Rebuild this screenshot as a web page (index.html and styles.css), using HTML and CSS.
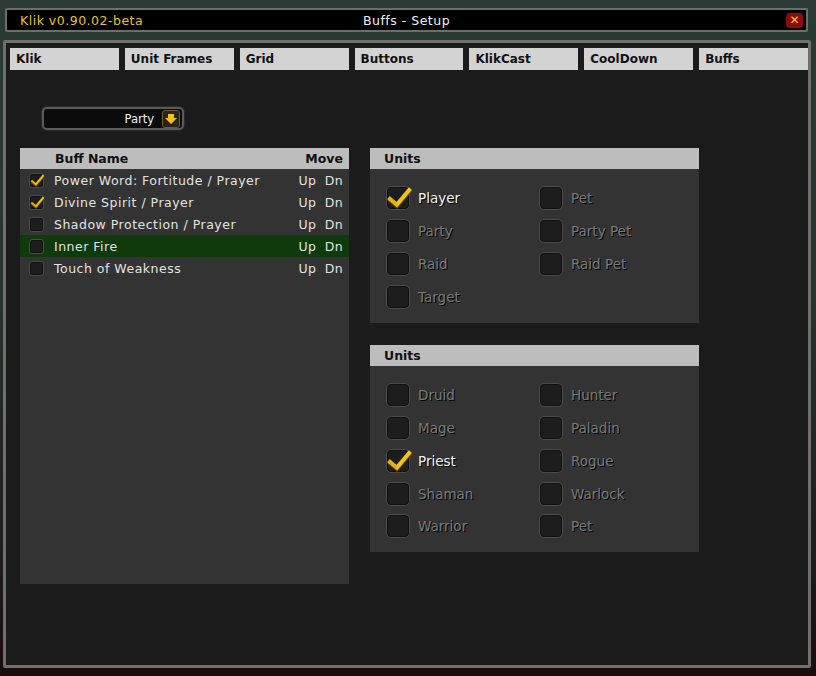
FILE: index.html
```html
<!DOCTYPE html>
<html lang="en">
<head>
  <meta charset="UTF-8">
  <title>Buffs - Setup</title>
  <link rel="stylesheet" href="styles.css">
</head>
<body>
  <div class="titlebar">
    <span class="addon">Klik v0.90.02-beta</span>
    <span class="title">Buffs - Setup</span>
    <span class="close">&#x2715;</span>
  </div>

  <div class="frame">
    <div class="tabs">
      <div class="tab">Klik</div>
      <div class="tab">Unit Frames</div>
      <div class="tab">Grid</div>
      <div class="tab">Buttons</div>
      <div class="tab">KlikCast</div>
      <div class="tab">CoolDown</div>
      <div class="tab">Buffs</div>
    </div>

    <div class="dropdown">
      <span class="dd-value">Party</span>
      <span class="dd-btn">
        <svg width="12" height="12" viewBox="0 0 12 12"><path d="M3 1h6v4h3L6 11 0 5h3z" fill="#f0c020"/></svg>
      </span>
    </div>

    <div class="content">
      <div class="buff-list">
        <div class="list-head">
          <span class="col-name">Buff Name</span>
          <span class="col-move">Move</span>
        </div>
        <div class="buff-row">
          <span class="cb small checked"></span>
          <span class="buff-name">Power Word: Fortitude / Prayer</span>
          <span class="move">Up&nbsp;&nbsp;Dn</span>
        </div>
        <div class="buff-row">
          <span class="cb small checked"></span>
          <span class="buff-name">Divine Spirit / Prayer</span>
          <span class="move">Up&nbsp;&nbsp;Dn</span>
        </div>
        <div class="buff-row">
          <span class="cb small"></span>
          <span class="buff-name">Shadow Protection / Prayer</span>
          <span class="move">Up&nbsp;&nbsp;Dn</span>
        </div>
        <div class="buff-row selected">
          <span class="cb small"></span>
          <span class="buff-name">Inner Fire</span>
          <span class="move">Up&nbsp;&nbsp;Dn</span>
        </div>
        <div class="buff-row">
          <span class="cb small"></span>
          <span class="buff-name">Touch of Weakness</span>
          <span class="move">Up&nbsp;&nbsp;Dn</span>
        </div>
      </div>

      <div class="right-col">
        <div class="group">
          <div class="group-head">Units</div>
          <div class="group-body units">
            <label class="opt on"><span class="cb checked"></span>Player</label>
            <label class="opt"><span class="cb"></span>Pet</label>
            <label class="opt"><span class="cb"></span>Party</label>
            <label class="opt"><span class="cb"></span>Party Pet</label>
            <label class="opt"><span class="cb"></span>Raid</label>
            <label class="opt"><span class="cb"></span>Raid Pet</label>
            <label class="opt"><span class="cb"></span>Target</label>
          </div>
        </div>

        <div class="group">
          <div class="group-head">Units</div>
          <div class="group-body classes">
            <label class="opt"><span class="cb"></span>Druid</label>
            <label class="opt"><span class="cb"></span>Hunter</label>
            <label class="opt"><span class="cb"></span>Mage</label>
            <label class="opt"><span class="cb"></span>Paladin</label>
            <label class="opt on"><span class="cb checked"></span>Priest</label>
            <label class="opt"><span class="cb"></span>Rogue</label>
            <label class="opt"><span class="cb"></span>Shaman</label>
            <label class="opt"><span class="cb"></span>Warlock</label>
            <label class="opt"><span class="cb"></span>Warrior</label>
            <label class="opt"><span class="cb"></span>Pet</label>
          </div>
        </div>
      </div>
    </div>
  </div>
</body>
</html>
```

FILE: styles.css
```css
body {
  margin: 0;
  width: 816px;
  height: 676px;
  overflow: hidden;
  font-family: 'DejaVu Sans', sans-serif;
  font-size: 12.5px;
  background: linear-gradient(180deg, #2b3b35 0%, #26332e 45%, #1e1f1c 80%, #1c0c0c 100%);
}
.titlebar {
  margin: 8px 8px 0 5px;
  height: 20px;
  background: #000;
  border: 2px solid #6d6d6b;
  border-radius: 2px;
  display: flex;
  align-items: center;
  position: relative;
  color: #fff;
  letter-spacing: 0.5px;
}
.addon {
  color: #e8c022;
  padding-left: 13px;
}
.title {
  position: absolute;
  left: 0;
  right: 0;
  text-align: center;
  color: #f0f0f0;
  pointer-events: none;
}
.close {
  margin-left: auto;
  margin-right: 3px;
  width: 17px;
  height: 15px;
  background: #8a0c0c;
  border-radius: 4px;
  color: #f3c81e;
  font-size: 12px;
  font-weight: bold;
  line-height: 15px;
  text-align: center;
  letter-spacing: 0;
}
.frame {
  margin: 8px 5px 0 3px;
  height: 622px;
  background: #1b1b1b;
  border: 3px solid #6f6f6c;
  border-radius: 2px;
}
.tabs {
  display: grid;
  grid-template-columns: repeat(7, 1fr);
  gap: 6px;
  padding: 5px 0 0 4px;
}
.tab {
  height: 22px;
  line-height: 22px;
  background: #d3d3d3;
  color: #111;
  font-weight: bold;
  font-size: 12px;
  padding-left: 6px;
}
.dropdown {
  margin: 37px 0 0 36px;
  width: 136px;
  height: 19px;
  border: 2px solid #5a5a5a;
  border-radius: 5px;
  background: #0b0b0b;
  box-shadow: 0 0 0 1px #2a2a2a;
  display: flex;
  align-items: center;
  justify-content: flex-end;
  padding-right: 2px;
}
.dd-value {
  color: #f0f0f0;
  font-size: 11.5px;
  margin-right: 8px;
}
.dd-btn {
  width: 16px;
  height: 16px;
  background: #2a2418;
  border: 1px solid #6a5a30;
  border-radius: 3px;
  display: flex;
  align-items: center;
  justify-content: center;
}
.content {
  display: flex;
  gap: 21px;
  margin: 18px 0 0 14px;
}
.buff-list {
  width: 329px;
  height: 436px;
  background: #333;
}
.list-head {
  height: 21px;
  background: #bdbdbd;
  color: #111;
  font-weight: bold;
  display: flex;
  align-items: center;
  padding: 0 6px 0 35px;
}
.col-move {
  margin-left: auto;
}
.buff-row {
  height: 22px;
  display: flex;
  align-items: center;
  color: #e2e2e2;
  padding: 0 6px 0 9px;
  letter-spacing: 0.5px;
}
.buff-row.selected {
  background: #0e3a0c;
}
.buff-name {
  margin-left: 10px;
}
.move {
  margin-left: auto;
  letter-spacing: 0.3px;
}
.right-col {
  width: 329px;
  display: flex;
  flex-direction: column;
  gap: 22px;
}
.group {
  background: #333;
}
.group-head {
  height: 21px;
  line-height: 21px;
  background: #bdbdbd;
  color: #111;
  font-weight: bold;
  padding-left: 14px;
}
.group-body {
  display: grid;
  grid-template-columns: 153px 1fr;
  grid-auto-rows: 33px;
  padding: 12px 0 10px 16px;
}
.group-body.classes {
  grid-template-rows: repeat(4, 33px) 32px;
  padding-bottom: 10px;
}
.opt {
  display: flex;
  align-items: center;
  gap: 8px;
  font-size: 13.5px;
  color: #7a7a7a;
  text-shadow: 1px 1px 0 #000;
}
.opt.on {
  color: #f2f2f2;
}
.cb {
  width: 24px;
  height: 24px;
  box-sizing: border-box;
  background: #1d1d1d;
  border: 1px solid #4a4a4a;
  border-radius: 5px;
  box-shadow: inset 0 0 0 1px #111;
  position: relative;
  flex: none;
}
.cb.small {
  width: 15px;
  height: 15px;
  border-radius: 3px;
}
.cb.checked::after {
  content: "";
  position: absolute;
  left: 6px;
  top: -4px;
  width: 9px;
  height: 19px;
  border-right: 4px solid #f0c418;
  border-bottom: 4px solid #e3b012;
  transform: rotate(40deg);
  filter: drop-shadow(1px 1px 0 #5a4200);
}
.cb.small.checked::after {
  left: 4px;
  top: -2px;
  width: 5px;
  height: 11px;
  border-right-width: 2px;
  border-bottom-width: 2px;
}
```
